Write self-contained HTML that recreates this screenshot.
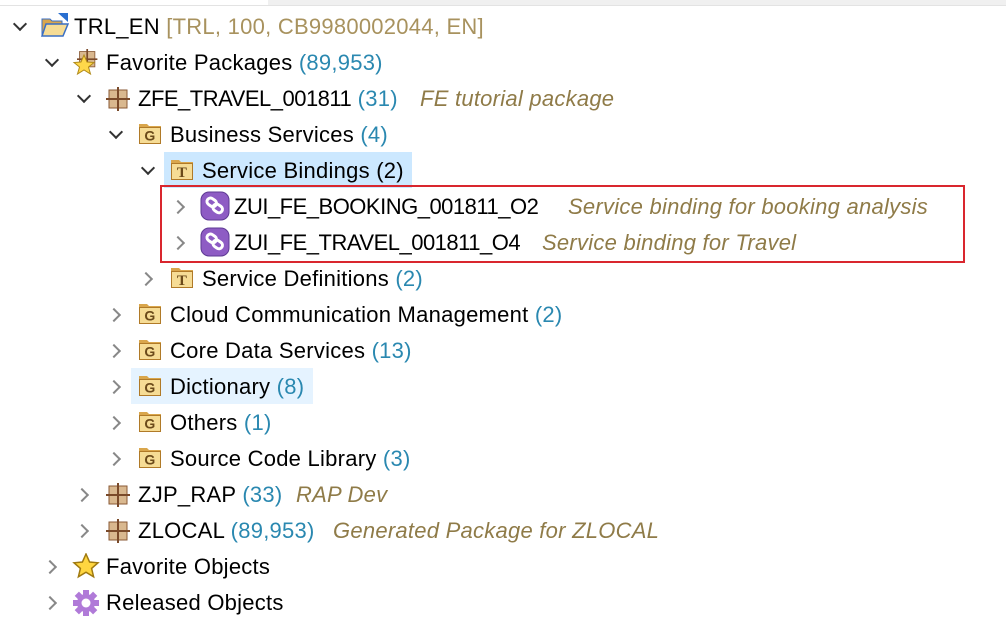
<!DOCTYPE html>
<html><head><meta charset="utf-8"><style>
body{margin:0;width:1006px;height:639px;background:#fff;position:relative;overflow:hidden;font-family:"Liberation Sans",sans-serif;font-size:22px;letter-spacing:0.25px;color:#000}
.r{position:absolute;height:36px;line-height:38px;white-space:nowrap}
.t{position:absolute;top:0}
.u{letter-spacing:-0.5px}
.c{color:#2a88b0}
.d{color:#8f7b48;font-style:italic}
.ar{position:absolute;width:8px;height:8px;border-right:2.5px solid #333;border-bottom:2.5px solid #333}
.dn{transform:rotate(45deg);top:11px}
.rt{transform:rotate(-45deg);top:14px;border-color:#888}
.ic{position:absolute;top:7px}
</style></head><body>
<div style="position:absolute;left:0;top:5px;width:1006px;height:1px;background:#e3e3e3"></div>
<div style="position:absolute;left:268px;top:0;width:738px;height:5px;background:#f0f0f0"></div>
<div style="position:absolute;left:164px;top:152px;width:248px;height:36px;background:#cce8ff"></div>
<div style="position:absolute;left:131px;top:368px;width:182px;height:36px;background:#e5f3ff"></div>
<div style="position:absolute;left:160px;top:185px;width:801px;height:74px;border:2px solid #d9262e"></div>

<svg width="0" height="0" style="position:absolute"><defs>
<g id="fg"><path d="M1 2h8l2 2h12v18H1z" fill="#d9a64c"/><path d="M1.5 5.5h21v16h-21z" fill="#f6dc95" stroke="#b07a28"/><text x="12" y="18.5" font-size="14" font-family="Liberation Sans" text-anchor="middle" fill="#6b4a1a" font-weight="bold">G</text></g>
<g id="ft"><path d="M1 2h8l2 2h12v18H1z" fill="#d9a64c"/><path d="M1.5 5.5h21v16h-21z" fill="#f6dc95" stroke="#b07a28"/><text x="12" y="19" font-size="15" font-family="Liberation Serif" text-anchor="middle" fill="#6b4a1a" font-weight="bold">T</text></g>
<g id="pk"><rect x="3" y="3" width="18" height="18" fill="#d9b88f" stroke="#8a5a36"/><path d="M12 0v24M0 12h24" stroke="#7a4a2a" stroke-width="2"/></g>
<g id="sb"><rect x="1" y="1" width="28" height="28" rx="8" fill="#8e5cc4" stroke="#5e3a94"/><g fill="none" stroke="#fff" stroke-width="3"><rect x="7" y="8" width="10" height="7" rx="3.5" transform="rotate(35 12 11)"/><rect x="13" y="14" width="10" height="7" rx="3.5" transform="rotate(35 18 17)"/></g></g>
</defs></svg>

<div class="r" style="top:8px;left:0;width:1000px"><span class="ar dn" style="left:15px"></span>
<svg class="ic" style="left:40px;top:3px" width="32" height="28"><path d="M2 8h8l2 2h10v14H2z" fill="#d9a64c" stroke="#3a6fc4"/><path d="M6 13h22l-5 12H2z" fill="#f6dc95" stroke="#3a6fc4" stroke-width="1.5"/><path d="M18 2h10v9z" fill="#2a6fd0"/></svg>
<span class="t" style="left:74px">TRL_EN <span style="color:#a8925e">[TRL, 100, CB9980002044, EN]</span></span></div>
<div class="r" style="top:44px;left:0;width:1000px"><span class="ar dn" style="left:47px"></span>
<svg class="ic" style="left:72px;top:5px" width="30" height="28"><use href="#pk" transform="translate(5,0) scale(.85)"/><path d="M12 6l3 7 7 .5-5.5 4.5 2 7-6.5-4-6.5 4 2-7L2 13.5 9 13z" fill="#ffd84a" stroke="#b08a1a"/></svg>
<span class="t" style="left:106px">Favorite Packages <span class="c">(89,953)</span></span></div>
<div class="r" style="top:80px;left:0;width:1000px"><span class="ar dn" style="left:79px"></span>
<svg class="ic" style="left:106px" width="24" height="24"><use href="#pk"/></svg>
<span class="t" style="left:138px"><span class="u">ZFE_TRAVEL_001811</span> <span class="c">(31)</span></span><span class="t d" style="left:420px">FE tutorial package</span></div>
<div class="r" style="top:116px;left:0"><span class="ar dn" style="left:111px"></span>
<svg class="ic" style="left:138px;top:6px" width="24" height="24"><use href="#fg"/></svg>
<span class="t" style="left:170px">Business&nbsp;Services&nbsp;<span class="c">(4)</span></span></div>
<div class="r" style="top:152px;left:0"><span class="ar dn" style="left:143px"></span>
<svg class="ic" style="left:170px;top:6px" width="24" height="24"><use href="#ft"/></svg>
<span class="t" style="left:202px">Service&nbsp;Bindings&nbsp;(2)</span></div>
<div class="r" style="top:188px;left:0;width:1000px"><span class="ar rt" style="left:173px"></span>
<svg class="ic" style="left:200px;top:3px" width="30" height="30"><use href="#sb"/></svg>
<span class="t u" style="left:234px">ZUI_FE_BOOKING_001811_O2</span><span class="t d" style="left:568px">Service binding for booking analysis</span></div>
<div class="r" style="top:224px;left:0;width:1000px"><span class="ar rt" style="left:173px"></span>
<svg class="ic" style="left:200px;top:3px" width="30" height="30"><use href="#sb"/></svg>
<span class="t u" style="left:234px">ZUI_FE_TRAVEL_001811_O4</span><span class="t d" style="left:542px">Service binding for Travel</span></div>
<div class="r" style="top:260px;left:0"><span class="ar rt" style="left:141px"></span>
<svg class="ic" style="left:170px;top:6px" width="24" height="24"><use href="#ft"/></svg>
<span class="t" style="left:202px">Service&nbsp;Definitions&nbsp;<span class="c">(2)</span></span></div>
<div class="r" style="top:296px;left:0"><span class="ar rt" style="left:109px"></span><svg class="ic" style="left:138px;top:6px" width="24" height="24"><use href="#fg"/></svg><span class="t" style="left:170px">Cloud&nbsp;Communication&nbsp;Management&nbsp;<span class="c">(2)</span></span></div>
<div class="r" style="top:332px;left:0"><span class="ar rt" style="left:109px"></span><svg class="ic" style="left:138px;top:6px" width="24" height="24"><use href="#fg"/></svg><span class="t" style="left:170px">Core&nbsp;Data&nbsp;Services&nbsp;<span class="c">(13)</span></span></div>
<div class="r" style="top:368px;left:0"><span class="ar rt" style="left:109px"></span><svg class="ic" style="left:138px;top:6px" width="24" height="24"><use href="#fg"/></svg><span class="t" style="left:170px">Dictionary&nbsp;<span class="c">(8)</span></span></div>
<div class="r" style="top:404px;left:0"><span class="ar rt" style="left:109px"></span><svg class="ic" style="left:138px;top:6px" width="24" height="24"><use href="#fg"/></svg><span class="t" style="left:170px">Others&nbsp;<span class="c">(1)</span></span></div>
<div class="r" style="top:440px;left:0"><span class="ar rt" style="left:109px"></span><svg class="ic" style="left:138px;top:6px" width="24" height="24"><use href="#fg"/></svg><span class="t" style="left:170px">Source&nbsp;Code&nbsp;Library&nbsp;<span class="c">(3)</span></span></div>
<div class="r" style="top:476px;left:0;width:1000px"><span class="ar rt" style="left:77px"></span><svg class="ic" style="left:106px" width="24" height="24"><use href="#pk"/></svg><span class="t" style="left:138px">ZJP_RAP <span class="c">(33)</span></span><span class="t d" style="left:296px">RAP Dev</span></div>
<div class="r" style="top:512px;left:0;width:1000px"><span class="ar rt" style="left:77px"></span><svg class="ic" style="left:106px" width="24" height="24"><use href="#pk"/></svg><span class="t" style="left:138px">ZLOCAL <span class="c">(89,953)</span></span><span class="t d" style="left:333px">Generated Package for ZLOCAL</span></div>
<div class="r" style="top:548px;left:0;width:400px"><span class="ar rt" style="left:45px"></span>
<svg class="ic" style="left:72px;top:5px" width="28" height="26"><path d="M14 1l3.6 8 8.4.8-6.4 5.6 2 8.4-7.6-4.6-7.6 4.6 2-8.4L2 9.8l8.4-.8z" fill="#ffd640" stroke="#a07a10" stroke-width="1.5"/></svg>
<span class="t" style="left:106px">Favorite Objects</span></div>
<div class="r" style="top:584px;left:0;width:400px"><span class="ar rt" style="left:45px"></span>
<svg class="ic" style="left:72px;top:5px" width="28" height="28"><g fill="#b07ad8"><circle cx="14" cy="14" r="9"/><g id="tt"><rect x="11" y="1" width="6" height="6"/><rect x="11" y="21" width="6" height="6"/></g><use href="#tt" transform="rotate(45 14 14)"/><use href="#tt" transform="rotate(90 14 14)"/><use href="#tt" transform="rotate(135 14 14)"/></g><circle cx="14" cy="14" r="4.5" fill="#fff"/></svg>
<span class="t" style="left:106px">Released Objects</span></div>
</body></html>
